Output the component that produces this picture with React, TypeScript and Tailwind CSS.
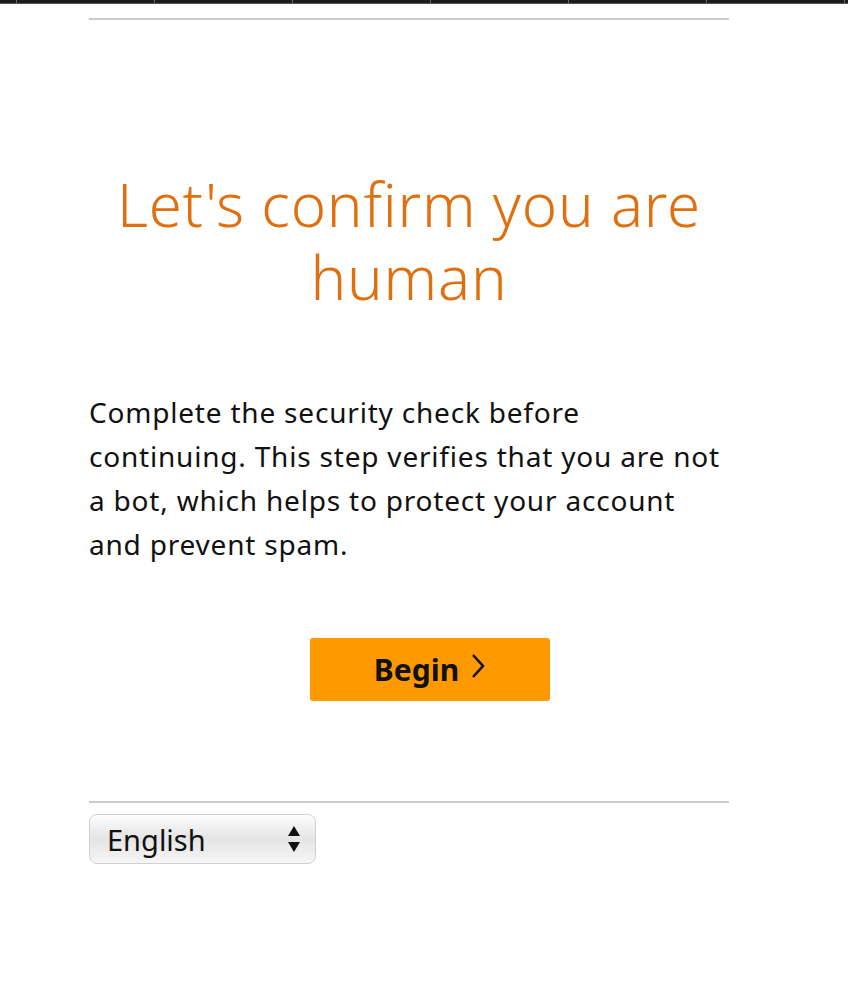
const ticks = [16, 154, 292, 430, 568, 706, 844];

export default function App() {
  return (
    <div className="min-h-[998px] w-[848px] bg-white font-['Noto_Sans',sans-serif] text-[#111]">
      {/* top dark strip */}
      <div className="relative h-[4px] bg-[#1b1b1b] border-b border-[#555]">
        {ticks.map((x) => (
          <span key={x} className="absolute top-0 h-[4px] w-px bg-[#666]" style={{ left: x }} />
        ))}
      </div>

      <div className="ml-[89px] w-[640px]">
        <div className="mt-[14px] h-[2px] bg-[#cccccc]" />

        <h1 className="mt-[148px] text-center text-[60px] leading-[73px] font-light text-[#e0700f] tracking-[0.8px]">
          Let's confirm you are human
        </h1>

        <p className="mt-[76px] text-[28px] leading-[44px] tracking-[0.8px] text-[#111]">
          Complete the security check before
          <br />
          continuing. This step verifies that you are not
          <br />
          a bot, which helps to protect your account
          <br />
          and prevent spam.
        </p>

        <div className="mt-[72px] flex justify-center pl-[41px]">
          <button className="flex h-[63px] w-[240px] items-center justify-center gap-[12px] rounded-[3px] bg-[#ff9900] text-[30px] font-bold text-[#111]">
            <span>Begin</span>
            <svg width="14" height="26" viewBox="0 0 14 26" className="mb-[8px]">
              <polyline points="2,2 12,13 2,24" fill="none" stroke="#111" strokeWidth="2.6" />
            </svg>
          </button>
        </div>

        <div className="mt-[100px] h-[2px] bg-[#cccccc]" />

        <div className="mt-[11px] flex h-[50px] w-[227px] items-center justify-between rounded-[8px] border border-[#d0d0d0] bg-gradient-to-b from-[#fdfdfd] via-[#e4e4e4] to-[#f6f6f6] pl-[17px] pr-[14px] shadow-[inset_0_1px_0_#fff]">
          <span className="text-[29px] leading-none">English</span>
          <svg width="14" height="30" viewBox="0 0 14 30">
            <path d="M7 2 L13 12 L1 12 Z" fill="#111" />
            <path d="M1 18 L13 18 L7 28 Z" fill="#111" />
          </svg>
        </div>
      </div>
    </div>
  );
}
